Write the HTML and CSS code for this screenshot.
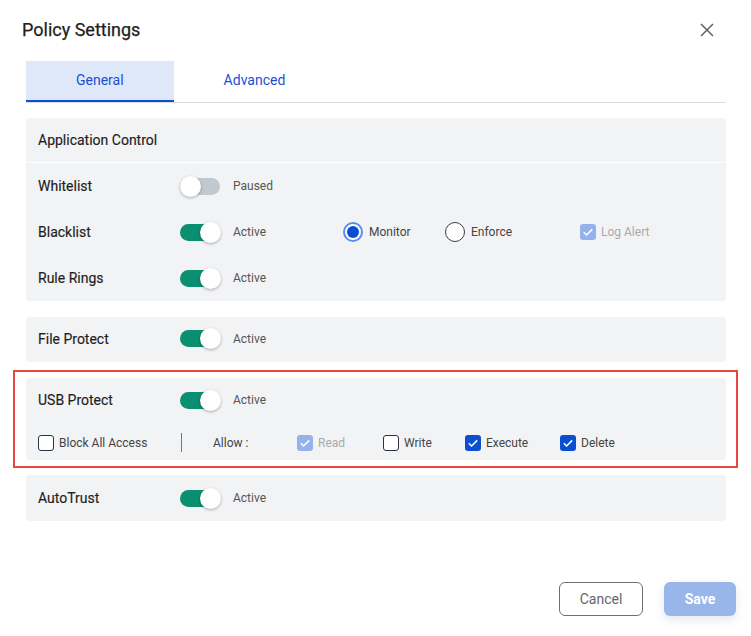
FILE: index.html
```html
<!DOCTYPE html>
<html>
<head>
<meta charset="utf-8">
<link rel="stylesheet" href="styles.css">
</head>
<body>
<div class="modal">
  <div class="header">
    <h1 class="title">Policy Settings</h1>
    <button class="close" aria-label="Close">
      <svg width="14" height="14" viewBox="0 0 14 14"><path d="M1 1L13 13M13 1L1 13" stroke="#5f6368" stroke-width="1.5" fill="none"/></svg>
    </button>
  </div>
  <div class="tabs">
    <div class="tab active">General</div>
    <div class="tab">Advanced</div>
  </div>
  <div class="cards">
    <div class="card">
      <div class="card-head">Application Control</div>
      <div class="row">
        <div class="label">Whitelist</div>
        <span class="toggle off"><span class="knob"></span></span>
        <span class="status">Paused</span>
      </div>
      <div class="row">
        <div class="label">Blacklist</div>
        <span class="toggle"><span class="knob"></span></span>
        <span class="status">Active</span>
        <span class="radio-opt monitor"><span class="radio checked"><span class="dot"></span></span>Monitor</span>
        <span class="radio-opt enforce"><span class="radio"></span>Enforce</span>
        <span class="check-opt disabled"><span class="cb checked"><svg viewBox="0 0 16 16"><path d="M3.8 8.2l2.8 2.8L12.2 5.4" stroke="#fff" stroke-width="1.5" fill="none"/></svg></span>Log Alert</span>
      </div>
      <div class="row">
        <div class="label">Rule Rings</div>
        <span class="toggle"><span class="knob"></span></span>
        <span class="status">Active</span>
      </div>
    </div>
    <div class="card">
      <div class="row single">
        <div class="label">File Protect</div>
        <span class="toggle"><span class="knob"></span></span>
        <span class="status">Active</span>
      </div>
    </div>
    <div class="highlight">
      <div class="card">
        <div class="row usb-top">
          <div class="label">USB Protect</div>
          <span class="toggle"><span class="knob"></span></span>
          <span class="status">Active</span>
        </div>
        <div class="row usb-perms">
          <span class="check-opt block"><span class="cb"></span>Block All Access</span>
          <span class="divider"></span>
          <span class="allow">Allow :</span>
          <span class="check-opt disabled read"><span class="cb checked"><svg viewBox="0 0 16 16"><path d="M3.8 8.2l2.8 2.8L12.2 5.4" stroke="#fff" stroke-width="1.5" fill="none"/></svg></span>Read</span>
          <span class="check-opt write"><span class="cb"></span>Write</span>
          <span class="check-opt exec"><span class="cb checked"><svg viewBox="0 0 16 16"><path d="M3.8 8.2l2.8 2.8L12.2 5.4" stroke="#fff" stroke-width="1.5" fill="none"/></svg></span>Execute</span>
          <span class="check-opt"><span class="cb checked"><svg viewBox="0 0 16 16"><path d="M3.8 8.2l2.8 2.8L12.2 5.4" stroke="#fff" stroke-width="1.5" fill="none"/></svg></span>Delete</span>
        </div>
      </div>
    </div>
    <div class="card">
      <div class="row single last">
        <div class="label">AutoTrust</div>
        <span class="toggle"><span class="knob"></span></span>
        <span class="status">Active</span>
      </div>
    </div>
  </div>
  <div class="footer">
    <button class="btn cancel">Cancel</button>
    <button class="btn save">Save</button>
  </div>
</div>
</body>
</html>
```
FILE: styles.css
```css
* { box-sizing: border-box; }
html, body { margin: 0; padding: 0; background: #fff; }
body { font-family: Roboto, "Liberation Sans", Arial, sans-serif; color: #222; }

.modal {
  width: 751px;
  height: 636px;
  display: flex;
  flex-direction: column;
  padding: 0 25px 0 26px;
}

.header {
  height: 61px;
  display: flex;
  align-items: center;
  justify-content: space-between;
  margin-left: -4px;
}
.title {
  margin: 0;
  font-size: 18px;
  font-weight: 400;
  color: #1e1e1e;
  padding-bottom: 2px;
  -webkit-text-stroke: 0.25px #1e1e1e;
}
.close {
  border: 0;
  background: none;
  padding: 0;
  width: 14px;
  height: 14px;
  margin-right: 12px;
  margin-bottom: 1px;
  display: flex;
}

.tabs {
  display: flex;
  height: 42px;
  border-bottom: 1px solid #dcdcdc;
}
.tab {
  padding: 0 50px;
  display: flex;
  align-items: center;
  font-size: 14px;
  color: #1a4fd6;
  padding-bottom: 3px;
}
.tab.active {
  background: #dfe8f8;
  border-bottom: 2px solid #0b4fd0;
  padding-bottom: 1px;
}

.cards {
  margin-top: 15px;
  display: flex;
  flex-direction: column;
  gap: 16px;
}
.card {
  background: #f2f3f5;
  border-radius: 4px;
}
.card-head {
  height: 45px;
  display: flex;
  align-items: center;
  padding-left: 12px;
  font-size: 14px;
  font-weight: 400;
  color: #1e1e1e;
  -webkit-text-stroke: 0.15px #1e1e1e;
  border-bottom: 1px solid #fff;
}
.row {
  height: 46px;
  display: flex;
  align-items: center;
  padding-left: 12px;
}
.row.single { height: 45px; padding-bottom: 2px; }
.row.single.last { height: 46px; padding-bottom: 0; }
.label {
  width: 142px;
  font-size: 14px;
  font-weight: 400;
  color: #1e1e1e;
  -webkit-text-stroke: 0.15px #1e1e1e;
}
.toggle {
  position: relative;
  width: 40px;
  height: 17px;
  border-radius: 9px;
  background: #0a8f70;
  flex: none;
}
.toggle.off { background: #c2c8cf; }
.knob {
  position: absolute;
  top: -2px;
  right: -1px;
  width: 21px;
  height: 21px;
  border-radius: 50%;
  background: #fff;
  box-shadow: 0 1px 3px rgba(0,0,0,0.3);
}
.toggle.off .knob { right: auto; left: 0; }
.status {
  width: 110px;
  margin-left: 13px;
  font-size: 12px;
  color: #555;
}

.radio-opt {
  display: flex;
  align-items: center;
  gap: 6px;
  font-size: 12px;
  color: #444;
}
.radio-opt.monitor { width: 102px; }
.radio-opt.enforce { width: 135px; }
.radio {
  width: 20px;
  height: 20px;
  border-radius: 50%;
  border: 1.5px solid #3a3f47;
  background: #fff;
  display: flex;
  align-items: center;
  justify-content: center;
}
.radio.checked { border: 2px solid #5a8df0; }
.dot {
  width: 12px;
  height: 12px;
  border-radius: 50%;
  background: #0b4fd0;
}

.check-opt {
  display: flex;
  align-items: center;
  gap: 5px;
  font-size: 12px;
  color: #444;
}
.cb {
  width: 16px;
  height: 16px;
  border-radius: 3px;
  border: 1.5px solid #2b3340;
  background: #fff;
  display: flex;
  flex: none;
}
.cb.checked { background: #0b4fd0; border: 0; }
.cb svg { width: 100%; height: 100%; }
.check-opt.disabled { color: #a9a9a9; }
.check-opt.disabled .cb.checked { background: #96b2ec; }

.highlight {
  border: 2px solid #e84545;
  padding: 6px 10px 6px 11px;
  margin: -8px -12px -9px -13px;
}
.row.usb-top { height: 44px; }
.row.usb-perms { height: 38px; padding-top: 3px; }
.check-opt.block { width: 143px; }
.divider {
  width: 1px;
  height: 19px;
  background: #777;
  margin-right: 31px;
}
.allow { width: 84px; font-size: 12px; color: #444; }
.check-opt.read { width: 86px; }
.check-opt.write { width: 82px; }
.check-opt.exec { width: 95px; }

.footer {
  margin-top: auto;
  display: flex;
  justify-content: flex-end;
  gap: 21px;
  padding-bottom: 20px;
  margin-right: -10px;
}
.btn {
  height: 34px;
  border-radius: 6px;
  font-family: Roboto, "Liberation Sans", Arial, sans-serif;
  font-size: 14px;
  cursor: pointer;
}
.cancel {
  width: 84px;
  background: #fff;
  border: 1px solid #6b6f76;
  color: #666;
}
.save {
  width: 72px;
  background: #98b6ea;
  border: 0;
  color: #fff;
  font-weight: 700;
  box-shadow: 0 4px 10px rgba(40,70,130,0.12);
}
```
